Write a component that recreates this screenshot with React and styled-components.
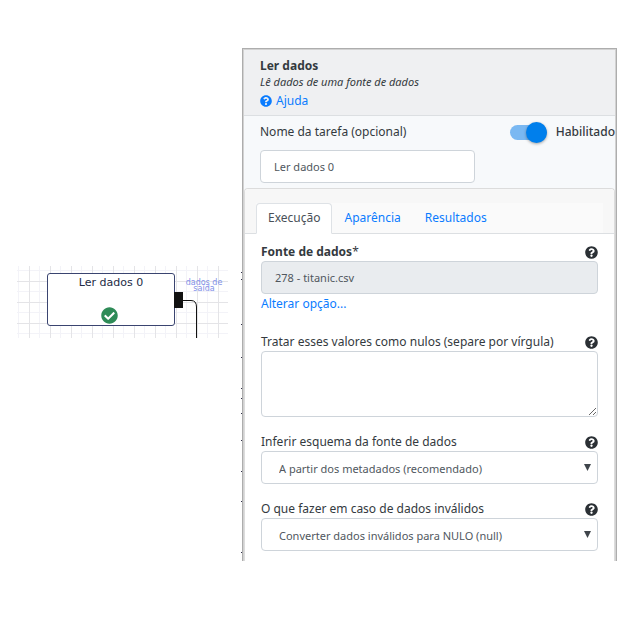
import React from 'react';
import styled, { createGlobalStyle } from 'styled-components';
import { FaQuestionCircle, FaCheckCircle } from 'react-icons/fa';

const GlobalStyle = createGlobalStyle`
  *, *::before, *::after { box-sizing: border-box; }
  body {
    margin: 0;
    background: #fff;
    color: #343a40;
    font: 12px/16px "Noto Sans", "Open Sans", sans-serif;
  }
`;

const Page = styled.main`
  display: flex;
  align-items: flex-start;
  padding: 48px 20px 57px 17px;
`;

const Canvas = styled.section`
  position: relative;
  flex: 0 0 211px;
  height: 72px;
  margin: 218px 13px 0 0;
  background-image:
    linear-gradient(90deg, #e4e4e7 1px, transparent 1px),
    linear-gradient(#e4e4e7 1px, transparent 1px),
    linear-gradient(90deg, #f3f3f8 1px, transparent 1px),
    linear-gradient(#f3f3f8 1px, transparent 1px);
  background-size: 21px 21px;
  background-position: 12px 0, 0 15px, 1px 0, 0 4px;
`;

const Node = styled.div`
  position: absolute;
  left: 30px;
  top: 7px;
  width: 128px;
  height: 53px;
  display: flex;
  flex-direction: column;
  align-items: center;
  justify-content: space-between;
  padding: 2px 0 1px;
  border: 1px solid #3a4470;
  border-radius: 3px;
  background: #fff;
  color: #222b45;
  font: 11px/14px "DejaVu Sans", sans-serif;

  svg { color: #2e8b57; margin-right: 3px; }
`;

const Port = styled.span`
  position: absolute;
  left: 157px;
  top: 26px;
  width: 9px;
  height: 16px;
  background: #111;
`;

const Wire = styled.svg`
  position: absolute;
  left: 166px;
  top: 33px;
`;

const PortLabel = styled.span`
  position: absolute;
  left: 164px;
  top: 14px;
  width: 46px;
  text-align: center;
  color: #7f90e8;
  font: 8px/6px "DejaVu Sans", sans-serif;
`;

const Edge = styled.svg`
  flex: none;
`;

const Panel = styled.form`
  flex: 1;
  min-width: 0;
  padding: 1px 1px 0;
  border: 1px solid #adadad;
  border-bottom: 0;
  background: #d2d2d2;
`;

const Header = styled.header`
  padding: 8px 16px 3px;
  border-bottom: 1px solid #dcdfe2;
  background: #eff0f2;
`;

const Title = styled.h1`
  margin: 0;
  font-size: 12px;
  line-height: 16px;
  font-weight: 700;
`;

const Summary = styled.p`
  margin: 0;
  font-size: 11px;
  line-height: 16px;
  font-style: italic;
`;

const Link = styled.a`
  display: inline-flex;
  align-items: center;
  gap: 4px;
  line-height: 22px;
  color: #0a7cff;
  text-decoration: none;
  vertical-align: top;
`;

const FieldLink = styled(Link)`
  line-height: 20px;
  margin-bottom: 3px;
`;

const TaskSection = styled.section`
  display: flex;
  justify-content: space-between;
  padding: 8px 0 5px 16px;
  background: #f7f9fb;
`;

const TaskName = styled.div`
  display: flex;
  flex-direction: column;
  gap: 10px;
  flex: 0 1 215px;
`;

const Control = styled.input`
  width: 100%;
  height: 33px;
  padding: 0 13px;
  border: 1px solid #ced4da;
  border-radius: 4px;
  outline: 0;
  background: ${(p) => (p.readOnly ? '#e9ecef' : '#fff')};
  color: #50575e;
  font: 11px/16px "Noto Sans", sans-serif;
`;

const SwitchLabel = styled.label`
  display: flex;
  align-items: center;
  gap: 9px;
  height: 16px;
  font-weight: 500;
`;

const Switch = styled.input`
  appearance: none;
  display: flex;
  align-items: center;
  justify-content: flex-end;
  width: 37px;
  height: 15px;
  margin: 0;
  border-radius: 8px;
  background: #7ab8f2;

  &::before {
    content: "";
    width: 21px;
    height: 21px;
    flex: none;
    border-radius: 50%;
    background: #007fec;
    box-shadow: 0 1px 3px rgba(0, 0, 0, 0.35);
  }
`;

const Card = styled.section`
  border: 1px solid #dcdcdc;
  border-bottom: 0;
  border-radius: 4px 4px 0 0;
  background: #fff;
`;

const CardArea = styled.div`
  background: #f7f9fb;
`;

const TabBar = styled.div`
  padding: 14px 11px 0;
  border-bottom: 1px solid #dcdfe2;
  border-radius: 4px 4px 0 0;
  background: #f7f7f7;
`;

const Tabs = styled.div`
  display: flex;
  margin-bottom: -1px;
  background: linear-gradient(#fafafa, #fafafa) 0 0 / 100% 30px no-repeat;
`;

const Tab = styled.button`
  height: 31px;
  padding: 0 11px 2px;
  border: 1px solid ${(p) => (p.$active ? '#dee2e6' : 'transparent')};
  border-bottom-color: ${(p) => (p.$active ? '#fff' : 'transparent')};
  border-radius: 4px 4px 0 0;
  background: ${(p) => (p.$active ? '#fff' : 'transparent')};
  color: ${(p) => (p.$active ? '#495057' : '#0a7cff')};
  font: 12px/16px "Noto Sans", sans-serif;
`;

const Fields = styled.div`
  display: flex;
  flex-direction: column;
  gap: 16px;
  padding: 9px 16px 10px;
`;

const FieldBox = styled.div`
  display: flex;
  flex-direction: column;
  align-items: flex-start;
`;

const FieldHead = styled.div`
  display: flex;
  align-items: center;
  justify-content: space-between;
  width: 100%;
  height: 18px;
  white-space: nowrap;
`;

const Star = styled.span`
  font-weight: 400;
`;

const FieldLabel = styled.label`
  font-weight: ${(p) => (p.$strong ? 700 : 400)};
`;

const HelpButton = styled.button`
  display: flex;
  padding: 0;
  border: 0;
  background: none;
  color: #2b3035;
`;

const TextArea = styled(Control)`
  display: block;
  height: 66px;
  resize: vertical;
`;

const SelectWrap = styled.div`
  display: grid;
  align-items: center;
  width: 100%;

  > * { grid-area: 1 / 1; }
  > svg { justify-self: end; margin-right: 7px; pointer-events: none; }
`;

const Select = styled(Control)`
  appearance: none;
  padding: 2px 17px 0;
`;

function Field({ id, label, strong, children }) {
  return (
    <FieldBox>
      <FieldHead>
        <FieldLabel htmlFor={id} $strong={strong}>
          {label}
          {strong && <Star>*</Star>}
        </FieldLabel>
        <HelpButton type="button" aria-label={`Ajuda: ${label}`}>
          <FaQuestionCircle size={13} />
        </HelpButton>
      </FieldHead>
      {children}
    </FieldBox>
  );
}

function SelectField({ id, label, option }) {
  return (
    <Field id={id} label={label}>
      <SelectWrap>
        <Select as="select" id={id}>
          <option>{option}</option>
        </Select>
        <svg width="7" height="7" viewBox="0 0 7 7" aria-hidden="true">
          <path d="M0 0h7L3.5 7z" fill="#3f454b" />
        </svg>
      </SelectWrap>
    </Field>
  );
}

const edgeMarks = [224, 231, 276, 309, 340, 350, 365, 392, 423, 453, 504];

export default function App() {
  return (
    <>
      <GlobalStyle />
      <Page>
        <Canvas aria-label="Fluxo">
          <Node>
            Ler dados 0
            <FaCheckCircle size={17} />
          </Node>
          <Port />
          <Wire width="16" height="39" viewBox="0 0 16 39" aria-hidden="true">
            <path d="M0 1.5H8Q13.500 1.500 13.500 8V39" fill="none" stroke="#111" />
          </Wire>
          <PortLabel>dados de saída</PortLabel>
        </Canvas>
        <Edge width="1" height="512" aria-hidden="true">
          {edgeMarks.map((y) => (
            <rect key={y} y={y} width="1" height="1" fill="#32324a" />
          ))}
        </Edge>
        <Panel onSubmit={(e) => e.preventDefault()}>
          <Header>
            <Title>Ler dados</Title>
            <Summary>Lê dados de uma fonte de dados</Summary>
            <Link href="#ajuda">
              <FaQuestionCircle size={12} />
              Ajuda
            </Link>
          </Header>
          <TaskSection>
            <TaskName>
              <label htmlFor="nome">Nome da tarefa (opcional)</label>
              <Control id="nome" defaultValue="Ler dados 0" />
            </TaskName>
            <SwitchLabel>
              <Switch type="checkbox" role="switch" defaultChecked />
              Habilitado
            </SwitchLabel>
          </TaskSection>
          <CardArea>
            <Card>
              <TabBar>
                <Tabs role="tablist">
                  <Tab type="button" role="tab" aria-selected="true" $active>Execução</Tab>
                  <Tab type="button" role="tab" aria-selected="false">Aparência</Tab>
                  <Tab type="button" role="tab" aria-selected="false">Resultados</Tab>
                </Tabs>
              </TabBar>
              <Fields>
                <Field id="fonte" label="Fonte de dados" strong>
                  <Control id="fonte" readOnly value="278 - titanic.csv" />
                  <FieldLink href="#alterar">Alterar opção...</FieldLink>
                </Field>
                <Field id="nulos" label="Tratar esses valores como nulos (separe por vírgula)">
                  <TextArea as="textarea" id="nulos" />
                </Field>
                <SelectField
                  id="esquema"
                  label="Inferir esquema da fonte de dados"
                  option="A partir dos metadados (recomendado)"
                />
                <SelectField
                  id="invalidos"
                  label="O que fazer em caso de dados inválidos"
                  option="Converter dados inválidos para NULO (null)"
                />
              </Fields>
            </Card>
          </CardArea>
        </Panel>
      </Page>
    </>
  );
}
